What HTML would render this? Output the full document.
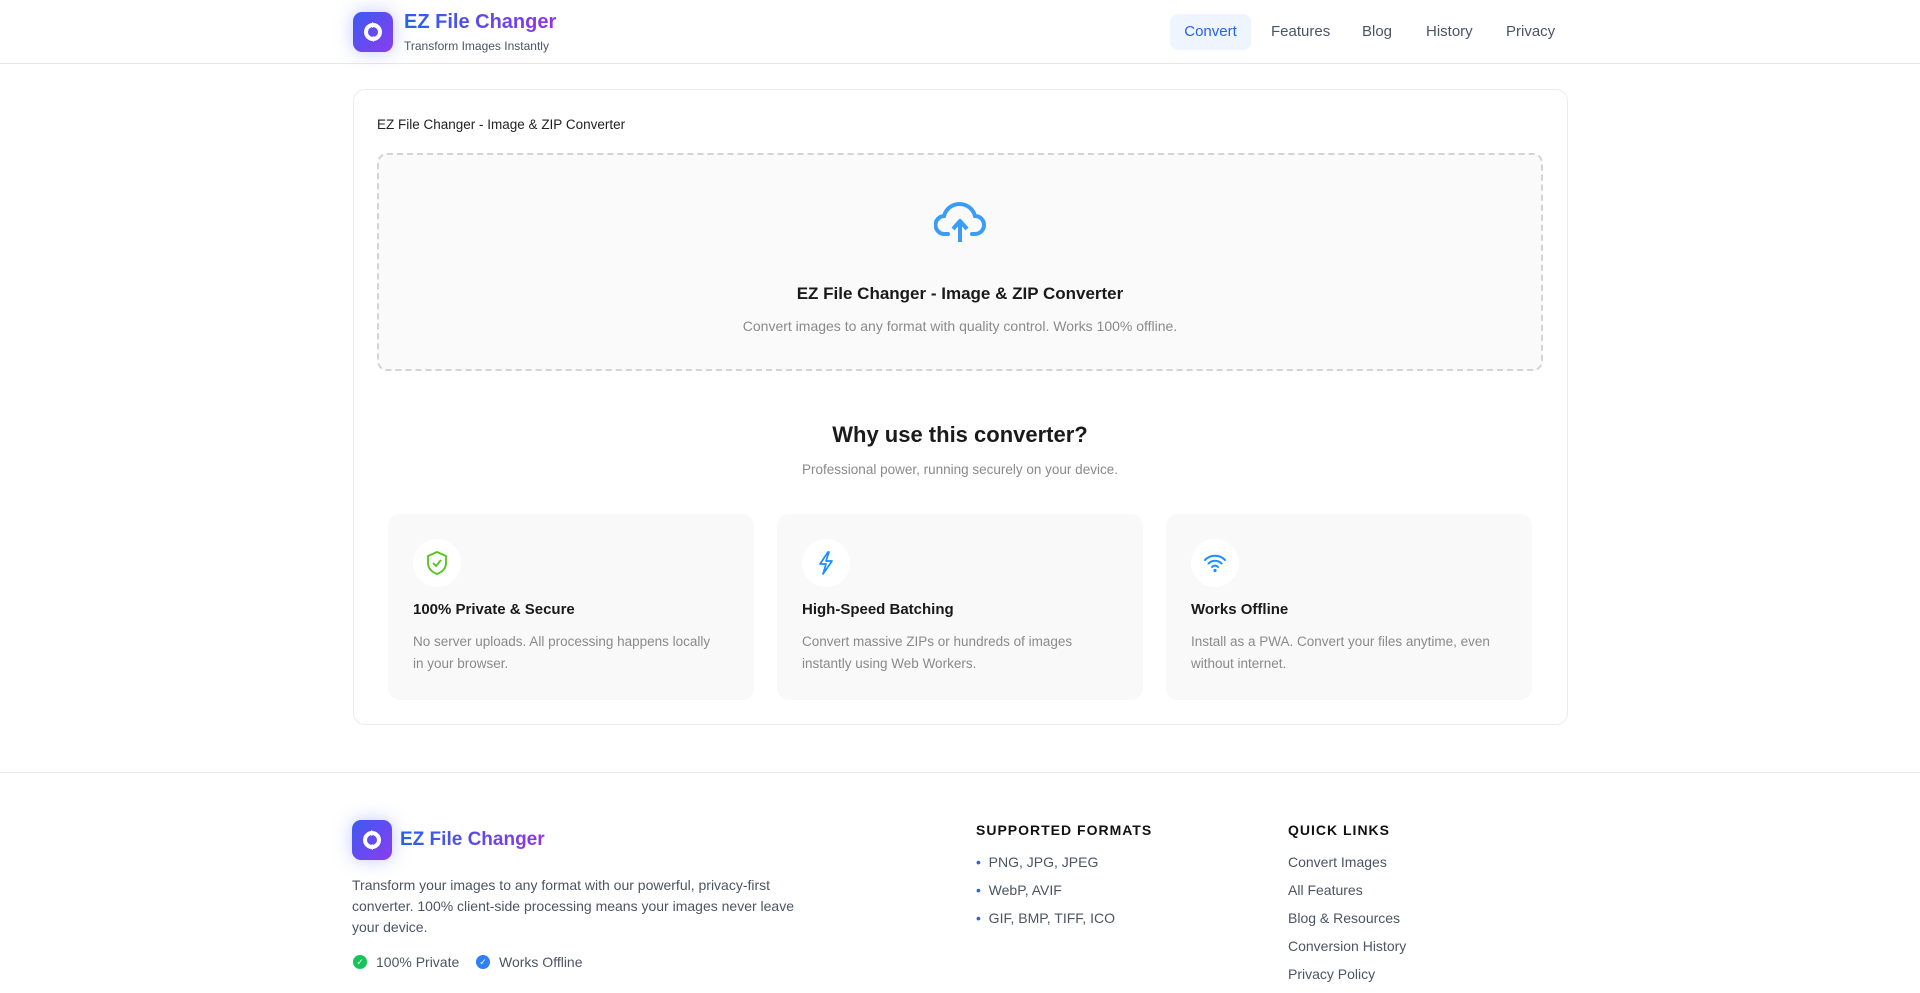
<!DOCTYPE html>
<html><head><meta charset="utf-8"><style>
*{box-sizing:border-box;margin:0;padding:0}
body{width:1920px;height:993px;overflow:hidden;background:#fff;font-family:"Liberation Sans",sans-serif;position:relative;color:#1f2937}
.abs{position:absolute}
.logo{width:40px;height:40px;border-radius:9px;background:linear-gradient(135deg,#3b5bf0,#8b3cf0);box-shadow:0 0 18px rgba(90,100,255,.35);display:flex;align-items:center;justify-content:center}
.grad{background:linear-gradient(90deg,#2563eb,#9333ea);-webkit-background-clip:text;background-clip:text;color:transparent;font-weight:bold}
.nav a{position:absolute;top:14px;height:36px;line-height:36px;font-size:15px;color:#4b5563;text-decoration:none}
.card{position:absolute;top:514px;width:366px;height:186px;background:#f9f9f9;border-radius:12px}
.ic{position:absolute;left:25px;top:25px;width:48px;height:48px;border-radius:50%;background:#fff;display:flex;align-items:center;justify-content:center}
.ct{position:absolute;left:25px;top:87px;font-size:15px;font-weight:bold;color:#1a1a1a}
.cd{position:absolute;left:25px;top:117px;width:310px;font-size:13.5px;line-height:22px;color:#8a8a8a}
.fh{position:absolute;top:822px;font-size:14px;font-weight:bold;letter-spacing:1px;color:#111}
.fl{position:absolute;font-size:14px;color:#4b5563}
</style></head><body>
<div class="abs" style="left:0;top:63px;width:1920px;height:1px;background:#e5e7eb"></div>
<div class="abs logo" style="left:353px;top:12px"><svg width="26" height="26" viewBox="0 0 26 26"><circle cx="13" cy="13" r="7" fill="none" stroke="#fff" stroke-width="4"/><path d="M12 3l5 3-5 3z" fill="#fff"/><path d="M14 23l-5-3 5-3z" fill="#fff"/></svg></div>
<div class="abs grad" style="left:404px;top:11px;font-size:20px">EZ File Changer</div>
<div class="abs" style="left:404px;top:39px;font-size:12px;color:#4b5563">Transform Images Instantly</div>
<div class="nav">
<a style="left:1170px;width:81px;background:#eff5ff;border-radius:8px;text-align:center;color:#2563eb">Convert</a>
<a style="left:1271px">Features</a><a style="left:1362px">Blog</a><a style="left:1426px">History</a><a style="left:1506px">Privacy</a>
</div>
<div class="abs" style="left:353px;top:89px;width:1215px;height:636px;border:1px solid #ececec;border-radius:12px"></div>
<div class="abs" style="left:377px;top:117px;font-size:13.5px;color:#222">EZ File Changer - Image &amp; ZIP Converter</div>
<div class="abs" style="left:377px;top:153px;width:1166px;height:218px;border:2px dashed #d4d4d4;border-radius:10px;background:#fafafa"></div>
<svg class="abs" style="left:934px;top:198px" width="52" height="48" viewBox="0 0 52 48"><path d="M14 36H11a9 9 0 0 1-1-18 16 16 0 0 1 31 0 9 9 0 0 1 0 18h-3" fill="none" stroke="#3b9cf5" stroke-width="4" stroke-linecap="round"/><path d="M26 44V24M19 31l7-8 7 8" fill="none" stroke="#3b9cf5" stroke-width="4" stroke-linejoin="round"/></svg>
<div class="abs" style="left:0;width:1920px;text-align:center;top:284px;font-size:17px;font-weight:bold;color:#1a1a1a">EZ File Changer - Image &amp; ZIP Converter</div>
<div class="abs" style="left:0;width:1920px;text-align:center;top:318px;font-size:14px;color:#8a8a8a">Convert images to any format with quality control. Works 100% offline.</div>
<div class="abs" style="left:0;width:1920px;text-align:center;top:422px;font-size:22px;font-weight:bold;color:#1a1a1a">Why use this converter?</div>
<div class="abs" style="left:0;width:1920px;text-align:center;top:462px;font-size:13.5px;color:#8a8a8a">Professional power, running securely on your device.</div>
<div class="card" style="left:388px"><div class="ic"><svg width="24" height="26" viewBox="0 0 24 26"><path d="M12 2l9 4v7c0 6-4 9-9 11-5-2-9-5-9-11V6z" fill="none" stroke="#52c41a" stroke-width="1.8"/><path d="M8 13l3 3 5-6" fill="none" stroke="#52c41a" stroke-width="1.8"/></svg></div><div class="ct">100% Private &amp; Secure</div><div class="cd">No server uploads. All processing happens locally in your browser.</div></div>
<div class="card" style="left:777px"><div class="ic"><svg width="24" height="26" viewBox="0 0 24 26"><path d="M14 2L6 14h6l-3 10 9-13h-6l3-9z" fill="none" stroke="#1890ff" stroke-width="1.7" stroke-linejoin="round"/></svg></div><div class="ct">High-Speed Batching</div><div class="cd">Convert massive ZIPs or hundreds of images instantly using Web Workers.</div></div>
<div class="card" style="left:1166px"><div class="ic"><svg width="26" height="24" viewBox="0 0 26 24"><path d="M3 9a14 14 0 0 1 20 0M6.5 12.5a9 9 0 0 1 13 0M10 16a4 4 0 0 1 6 0" fill="none" stroke="#1890ff" stroke-width="2" stroke-linecap="round"/><circle cx="13" cy="19.5" r="1.6" fill="#1890ff"/></svg></div><div class="ct">Works Offline</div><div class="cd">Install as a PWA. Convert your files anytime, even without internet.</div></div>
<div class="abs" style="left:0;top:772px;width:1920px;height:1px;background:#e5e7eb"></div>
<div class="abs logo" style="left:352px;top:820px"><svg width="26" height="26" viewBox="0 0 26 26"><circle cx="13" cy="13" r="7" fill="none" stroke="#fff" stroke-width="4"/><path d="M12 3l5 3-5 3z" fill="#fff"/><path d="M14 23l-5-3 5-3z" fill="#fff"/></svg></div>
<div class="abs grad" style="left:400px;top:829px;font-size:19px">EZ File Changer</div>
<div class="abs" style="left:352px;top:875px;width:470px;font-size:14px;line-height:21px;color:#4b5563">Transform your images to any format with our powerful, privacy-first converter. 100% client-side processing means your images never leave your device.</div>
<div class="abs" style="left:353px;top:955px;width:14px;height:14px;border-radius:50%;background:#16c45a;color:#fff;font-size:9px;text-align:center;line-height:14px">✓</div>
<div class="fl" style="left:376px;top:954px">100% Private</div>
<div class="abs" style="left:476px;top:955px;width:14px;height:14px;border-radius:50%;background:#2f7ff5;color:#fff;font-size:9px;text-align:center;line-height:14px">✓</div>
<div class="fl" style="left:499px;top:954px">Works Offline</div>
<div class="fh" style="left:976px">SUPPORTED FORMATS</div>
<div class="fl" style="left:976px;top:854px"><span style="color:#2563eb">•</span>&nbsp; PNG, JPG, JPEG</div>
<div class="fl" style="left:976px;top:882px"><span style="color:#2563eb">•</span>&nbsp; WebP, AVIF</div>
<div class="fl" style="left:976px;top:910px"><span style="color:#2563eb">•</span>&nbsp; GIF, BMP, TIFF, ICO</div>
<div class="fh" style="left:1288px">QUICK LINKS</div>
<div class="fl" style="left:1288px;top:854px">Convert Images</div>
<div class="fl" style="left:1288px;top:882px">All Features</div>
<div class="fl" style="left:1288px;top:910px">Blog &amp; Resources</div>
<div class="fl" style="left:1288px;top:938px">Conversion History</div>
<div class="fl" style="left:1288px;top:966px">Privacy Policy</div>
</body></html>
